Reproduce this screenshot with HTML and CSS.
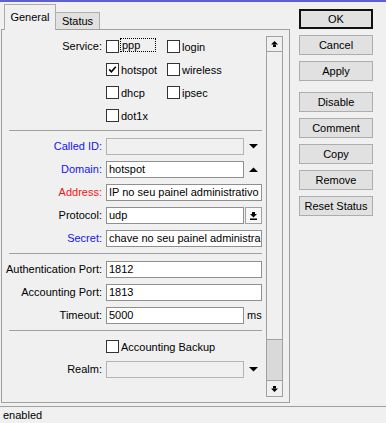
FILE: index.html
```html
<!DOCTYPE html>
<html lang="en">
<head>
    <meta charset="UTF-8">
    <meta name="viewport" content="width=device-width, initial-scale=1.0">
    <title>RADIUS Server</title>
    <link rel="stylesheet" href="styles.css">
</head>
<body>
<div class="window">
    <div class="accent"></div>
    <div class="main">
        <div class="tabbox">
            <div class="tabs">
                <div class="tab active">General</div>
                <div class="tab">Status</div>
            </div>
            <div class="panel">
                <div class="form">
                    <div class="row">
                        <div class="label">Service:</div>
                        <div class="checks">
                            <div class="check"><span class="box"></span><span class="focus">ppp</span></div>
                            <div class="check"><span class="box"></span>login</div>
                            <div class="check"><span class="box"><svg width="11" height="11" viewBox="0 0 11 11"><path d="M2.2 5.4 4.4 7.8 8.8 2.8" fill="none" stroke="#000" stroke-width="1.6"/></svg></span>hotspot</div>
                            <div class="check"><span class="box"></span>wireless</div>
                            <div class="check"><span class="box"></span>dhcp</div>
                            <div class="check"><span class="box"></span>ipsec</div>
                            <div class="check"><span class="box"></span>dot1x</div>
                        </div>
                    </div>
                    <div class="sep"></div>
                    <div class="row">
                        <div class="label blue">Called ID:</div>
                        <div class="field disabled"></div>
                        <div class="arrow"><svg width="9" height="5" viewBox="0 0 9 5"><path d="M0 0h9L4.5 4.6z"/></svg></div>
                    </div>
                    <div class="row">
                        <div class="label blue">Domain:</div>
                        <div class="field">hotspot</div>
                        <div class="arrow"><svg width="9" height="5" viewBox="0 0 9 5"><path d="M0 5h9L4.5 0.4z"/></svg></div>
                    </div>
                    <div class="row">
                        <div class="label red">Address:</div>
                        <div class="field wide">IP no seu painel administrativo</div>
                    </div>
                    <div class="row">
                        <div class="label">Protocol:</div>
                        <div class="field">udp</div>
                        <div class="drop-btn"><svg width="7" height="8" viewBox="0 0 7 8"><rect x="2" y="0" width="3" height="2"/><path d="M0 2h7L3.5 5.5z"/><rect x="0" y="6.5" width="7" height="1.5"/></svg></div>
                    </div>
                    <div class="row">
                        <div class="label blue">Secret:</div>
                        <div class="field wide">chave no seu painel administra</div>
                    </div>
                    <div class="sep"></div>
                    <div class="row">
                        <div class="label">Authentication Port:</div>
                        <div class="field wide">1812</div>
                    </div>
                    <div class="row">
                        <div class="label">Accounting Port:</div>
                        <div class="field wide">1813</div>
                    </div>
                    <div class="row">
                        <div class="label">Timeout:</div>
                        <div class="field">5000</div>
                        <div class="unit">ms</div>
                    </div>
                    <div class="sep"></div>
                    <div class="row">
                        <div class="label"></div>
                        <div class="check single"><span class="box"></span>Accounting Backup</div>
                    </div>
                    <div class="row">
                        <div class="label">Realm:</div>
                        <div class="field disabled"></div>
                        <div class="arrow"><svg width="9" height="5" viewBox="0 0 9 5"><path d="M0 0h9L4.5 4.6z"/></svg></div>
                    </div>
                </div>
                <div class="scrollbar">
                    <div class="sb-btn up"><svg width="7" height="6" viewBox="0 0 7 6"><path d="M3.5 0 7 3.5H0z"/><rect x="2" y="3.5" width="3" height="2.5"/></svg></div>
                    <div class="thumb"></div>
                    <div class="track"></div>
                    <div class="sb-btn down"><svg width="7" height="6" viewBox="0 0 7 6"><rect x="2" y="0" width="3" height="2.5"/><path d="M0 2.5h7L3.5 6z"/></svg></div>
                </div>
            </div>
        </div>
        <div class="buttons">
            <div class="btn default">OK</div>
            <div class="btn">Cancel</div>
            <div class="btn">Apply</div>
            <div class="btn spaced">Disable</div>
            <div class="btn">Comment</div>
            <div class="btn">Copy</div>
            <div class="btn">Remove</div>
            <div class="btn">Reset Status</div>
        </div>
    </div>
    <div class="status">enabled</div>
</div>
</body>
</html>
```

FILE: styles.css
```css
body {
    margin: 0;
    background-color: #f0f0f0;
    color: #000;
    font-family: "Liberation Sans", Arial, sans-serif;
    font-size: 11px;
}
.window {
    height: 423px;
    display: flex;
    flex-direction: column;
}
.accent {
    height: 2px;
    background-color: #5f5fd4;
}
.main {
    display: flex;
    height: 404px;
}
.tabbox {
    margin-left: 1px;
    width: 289px;
    display: flex;
    flex-direction: column;
}
.tabs {
    height: 27px;
    display: flex;
    align-items: flex-end;
    padding-left: 3px;
}
.tab {
    box-sizing: border-box;
    display: flex;
    align-items: center;
    justify-content: center;
    border: 1px solid #adadad;
    border-bottom: none;
}
.tab.active {
    position: relative;
    z-index: 1;
    width: 52px;
    height: 26px;
    margin-bottom: -1px;
    padding-bottom: 1px;
    background-color: #f0f0f0;
}
.tab:not(.active) {
    width: 45px;
    height: 17px;
    margin-left: -1px;
    padding-bottom: 1px;
    background-color: #e1e1e1;
}
.panel {
    box-sizing: border-box;
    height: 374px;
    border: 1px solid #a0a0a0;
    display: flex;
}
.form {
    flex: 1;
    padding-top: 8px;
    display: flex;
    flex-direction: column;
    gap: 6px;
}
.row {
    display: grid;
    grid-template-columns: 104px 138px 18px;
    min-height: 17px;
    align-items: start;
}
.label {
    text-align: right;
    padding-right: 4px;
    line-height: 17px;
    white-space: nowrap;
}
.label.blue {
    color: #1414f0;
}
.label.red {
    color: #f01414;
}
.sep {
    width: 253px;
    height: 1px;
    margin: 0 0 1px 7px;
    background-color: #a0a0a0;
}
.field {
    box-sizing: border-box;
    height: 17px;
    border: 1px solid #8f8f8f;
    background-color: #fff;
    padding-left: 2px;
    line-height: 15px;
    white-space: nowrap;
    overflow: hidden;
}
.field.wide {
    grid-column: 2 / 4;
}
.field.disabled {
    background-color: #f0f0f0;
    border-color: #b4b4b4;
}
.arrow {
    height: 17px;
    display: flex;
    align-items: center;
    justify-content: center;
}
.unit {
    padding-left: 3px;
    line-height: 17px;
}
.drop-btn {
    box-sizing: border-box;
    width: 17px;
    height: 17px;
    margin-left: 1px;
    border: 1px solid #a0a0a0;
    background-color: #f7f7f7;
    display: flex;
    align-items: center;
    justify-content: center;
}
.checks {
    grid-column: 2 / 4;
    display: grid;
    grid-template-columns: 61px auto;
    row-gap: 6px;
}
.check {
    height: 17px;
    display: flex;
    align-items: center;
    gap: 2px;
    white-space: nowrap;
}
.check.single {
    grid-column: 2 / 4;
}
.box {
    box-sizing: border-box;
    width: 13px;
    height: 13px;
    border: 1px solid #333;
    background-color: #fff;
    display: flex;
    align-items: center;
    justify-content: center;
}
.focus {
    box-sizing: border-box;
    align-self: flex-start;
    width: 36px;
    height: 14px;
    margin-left: -1px;
    padding-left: 1px;
    border: 1px dotted #000;
    line-height: 13px;
}
.scrollbar {
    box-sizing: border-box;
    width: 17px;
    margin: 6px 6px 5px 0;
    border: 1px solid #a0a0a0;
    background-color: #d9d9d9;
    display: flex;
    flex-direction: column;
}
.sb-btn {
    box-sizing: border-box;
    display: flex;
    align-items: center;
    justify-content: center;
    background-color: #f0f0f0;
}
.sb-btn.up {
    height: 15px;
    border-bottom: 1px solid #a0a0a0;
}
.sb-btn.down {
    height: 16px;
    border-top: 1px solid #a0a0a0;
}
.thumb {
    box-sizing: border-box;
    height: 288px;
    border-bottom: 1px solid #a0a0a0;
    background-color: #f0f0f0;
}
.track {
    flex: 1;
}
.buttons {
    margin-left: 9px;
    padding-top: 7px;
    display: flex;
    flex-direction: column;
    gap: 6px;
}
.btn {
    box-sizing: border-box;
    width: 74px;
    height: 20px;
    border: 1px solid #adadad;
    background-color: #e1e1e1;
    display: flex;
    align-items: center;
    justify-content: center;
}
.btn.default {
    border-color: #111;
    box-shadow: inset 0 0 0 1px #111;
}
.btn.spaced {
    margin-top: 5px;
}
.status {
    flex: 1;
    border-top: 1px solid #a0a0a0;
    padding-left: 3px;
    line-height: 16px;
}
```
